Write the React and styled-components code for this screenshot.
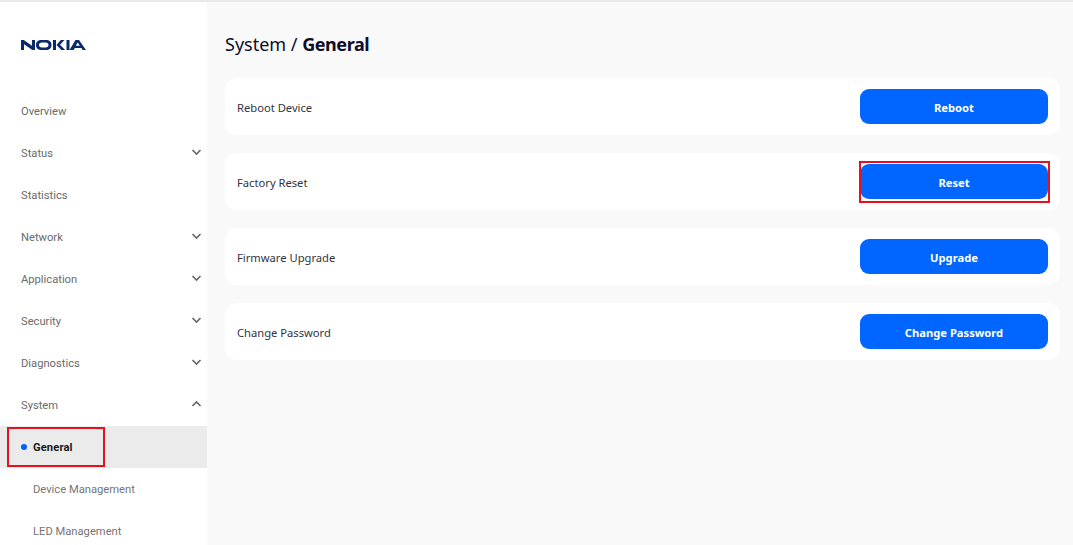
import React from "react";
import styled, { createGlobalStyle } from "styled-components";

const Global = createGlobalStyle`
  html, body { margin: 0; padding: 0; height: 545px; overflow: hidden; background: #f9f9f9; }
  * { box-sizing: border-box; }
`;

const Page = styled.div`
  display: flex;
  height: 545px;
  overflow: hidden;
  border-top: 2px solid #e9e9e9;
`;

const Sidebar = styled.aside`
  width: 207px;
  flex: none;
  background: #fff;
  font-family: Roboto, sans-serif;
  font-size: 11.2px;
`;

const LogoWrap = styled.div`
  height: 88px;
  padding: 38px 0 0 21px;
  line-height: 0;
`;

const Nav = styled.nav`
  display: flex;
  flex-direction: column;
`;

const Item = styled.div`
  height: 42px;
  display: flex;
  align-items: center;
  justify-content: space-between;
  padding: 1px 5px 0 21px;
  color: #6a6a6a;
`;

const SubItem = styled.div`
  position: relative;
  height: 42px;
  display: flex;
  align-items: center;
  padding: 1px 0 0 33px;
  color: ${(p) => (p.$active ? "#1a1a1a" : "#757575")};
  font-weight: ${(p) => (p.$active ? 700 : 400)};
  letter-spacing: ${(p) => (p.$active ? "0.1px" : "0")};
  background: ${(p) => (p.$active ? "#ebebeb" : "transparent")};
`;

const Dot = styled.span`
  position: absolute;
  left: 21px;
  top: 18px;
  width: 6px;
  height: 6px;
  border-radius: 50%;
  background: #0062f5;
`;

const NavMark = styled.span`
  position: absolute;
  left: 7px;
  top: 1px;
  width: 98px;
  height: 40px;
  border: 2px solid #e8101c;
`;

const Main = styled.main`
  flex: 1;
  padding: 28px 13px 0 18px;
  font-family: "Noto Sans", sans-serif;
`;

const Title = styled.h1`
  margin: 0 0 20px;
  height: 28px;
  font-size: 18px;
  line-height: 28px;
  font-weight: 400;
  color: #0c0c2c;
`;

const Strong = styled.strong`
  font-weight: 700;
  letter-spacing: -0.45px;
`;

const Cards = styled.div`
  display: flex;
  flex-direction: column;
  gap: 18px;
`;

const Card = styled.section`
  height: 57px;
  display: flex;
  align-items: center;
  justify-content: space-between;
  padding: 0 12px;
  background: #fff;
  border-radius: 12px;
`;

const Label = styled.span`
  font-size: 11.2px;
  color: #333340;
  padding-top: 1px;
`;

const ButtonWrap = styled.div`
  position: relative;
  line-height: 0;
`;

const Button = styled.button`
  width: 188px;
  height: 35px;
  padding: 1px 0 0;
  border: none;
  border-radius: 9px;
  background: #0066ff;
  color: #fff;
  font-family: "Noto Sans", sans-serif;
  font-size: 11.2px;
  font-weight: 700;
`;

const ButtonMark = styled.span`
  position: absolute;
  left: -1px;
  top: -3px;
  width: 191px;
  height: 42px;
  border: 2px solid #e8101c;
`;

const ChevronIcon = styled.svg`
  margin: -3px 0 0 0;
`;

const Chevron = ({ up }) => (
  <ChevronIcon width="12" height="8" viewBox="0 0 12 8" fill="none" stroke="#666" strokeWidth="1.6">
    <path d={up ? "M2.500 6 6.500 2l4 4" : "M2.500 2l4 4 4-4"} />
  </ChevronIcon>
);

const Logo = () => (
  <svg width="65" height="10" viewBox="0 0 65 10" fill="#0b2a6b">
    <path d="M0 10V0h2.700l8.300 5.700V0h3v10h-2.700L3 4.300V10z" />
    <path fillRule="evenodd" d="M20.500 0h4.500c3.400 0 5.500 1.800 5.500 5s-2.100 5-5.500 5h-4.500C17.100 10 15 8.200 15 5s2.100-5 5.500-5zm.4 2.500c-1.900 0-2.900.9-2.900 2.500s1 2.500 2.900 2.500h3.700c1.900 0 2.900-.9 2.900-2.500s-1-2.500-2.900-2.500z" />
    <path d="M32 0h3v10h-3zM35.500 5l4.300-5h3.700l-4.500 4.800 5.200 5.200h-3.900z" />
    <path d="M45.500 0h3v10h-3z" />
    <path fillRule="evenodd" d="M48.500 10 54.500 0h3.500L65 10h-3.400l-1.200-2h-6.600L52.700 10zm6.200-4.200h4.200L56.700 2.600z" />
  </svg>
);

const topItems = [
  ["Overview"],
  ["Status", "down"],
  ["Statistics"],
  ["Network", "down"],
  ["Application", "down"],
  ["Security", "down"],
  ["Diagnostics", "down"],
  ["System", "up"],
];

const rows = [
  ["Reboot Device", "Reboot"],
  ["Factory Reset", "Reset", true],
  ["Firmware Upgrade", "Upgrade"],
  ["Change Password", "Change Password"],
];

export default function App() {
  return (
    <>
      <Global />
      <Page>
        <Sidebar>
          <LogoWrap>
            <Logo />
          </LogoWrap>
          <Nav>
            {topItems.map(([name, dir]) => (
              <Item key={name}>
                {name}
                {dir && <Chevron up={dir === "up"} />}
              </Item>
            ))}
            <SubItem $active>
              <Dot />
              General
              <NavMark />
            </SubItem>
            <SubItem>Device Management</SubItem>
            <SubItem>LED Management</SubItem>
          </Nav>
        </Sidebar>
        <Main>
          <Title>
            System / <Strong>General</Strong>
          </Title>
          <Cards>
            {rows.map(([label, action, marked]) => (
              <Card key={label}>
                <Label>{label}</Label>
                <ButtonWrap>
                  <Button>{action}</Button>
                  {marked && <ButtonMark />}
                </ButtonWrap>
              </Card>
            ))}
          </Cards>
        </Main>
      </Page>
    </>
  );
}
